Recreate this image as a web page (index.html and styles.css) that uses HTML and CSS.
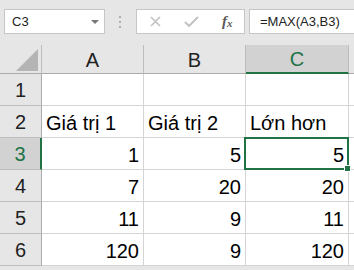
FILE: index.html
```html
<!DOCTYPE html>
<html lang="vi">
<head>
  <meta charset="UTF-8">
  <title>MAX</title>
  <link rel="stylesheet" href="styles.css">
</head>
<body>

  <div class="formula-bar">
    <div class="name-box">
      <span>C3</span>
      <svg class="caret" width="8" height="4" viewBox="0 0 8 4"><path d="M0 0h8L4 4z" fill="#777"/></svg>
    </div>
    <div class="grip">
      <svg width="3" height="12" viewBox="0 0 3 12">
        <rect x="0" y="0" width="2" height="2" fill="#b0b0b0"/>
        <rect x="0" y="5" width="2" height="2" fill="#b0b0b0"/>
        <rect x="0" y="10" width="2" height="2" fill="#b0b0b0"/>
      </svg>
    </div>
    <div class="fx-buttons">
      <svg class="btn-x" width="11" height="11" viewBox="0 0 11 11"><path d="M1 1l9 9M10 1l-9 9" stroke="#c2c2c2" stroke-width="1.6"/></svg>
      <svg class="btn-ok" width="15" height="11" viewBox="0 0 15 11"><path d="M1 6l4 4 9-9" stroke="#c2c2c2" stroke-width="2" fill="none"/></svg>
      <span class="fx">f<sub>x</sub></span>
    </div>
    <div class="formula">=MAX(A3,B3)</div>
  </div>

  <div class="sheet">
    <div class="hd corner">
      <svg width="41" height="28" viewBox="0 0 41 28"><path d="M38 4V26H16z" fill="#b4b4b4"/></svg>
    </div>
    <div class="hd col">A</div>
    <div class="hd col">B</div>
    <div class="hd col active-col">C</div>
    <div class="hd col rest"></div>

    <div class="hd row">1</div>
    <div class="cell"></div><div class="cell"></div><div class="cell"></div><div class="cell rest"></div>

    <div class="hd row">2</div>
    <div class="cell">Giá trị 1</div><div class="cell">Giá trị 2</div><div class="cell">Lớn hơn</div><div class="cell rest"></div>

    <div class="hd row active-row">3</div>
    <div class="cell num">1</div><div class="cell num">5</div><div class="cell num selected">5</div><div class="cell rest"></div>

    <div class="hd row">4</div>
    <div class="cell num">7</div><div class="cell num">20</div><div class="cell num">20</div><div class="cell rest"></div>

    <div class="hd row">5</div>
    <div class="cell num">11</div><div class="cell num">9</div><div class="cell num">11</div><div class="cell rest"></div>

    <div class="hd row">6</div>
    <div class="cell num">120</div><div class="cell num">9</div><div class="cell num">120</div><div class="cell rest"></div>
  </div>

</body>
</html>
```

FILE: styles.css
```css
* {
  box-sizing: border-box;
}

body {
  margin: 0;
  background: #e6e6e6;
  font-family: 'Liberation Sans', Arial, sans-serif;
  color: #000;
  overflow: hidden;
}

.formula-bar {
  display: flex;
  align-items: flex-start;
  height: 45px;
  padding-top: 9px;
  padding-left: 4px;
}

.name-box {
  display: flex;
  align-items: center;
  justify-content: space-between;
  width: 101px;
  height: 25px;
  background: #fff;
  border: 1px solid #c6c6c6;
  padding: 0 5px 0 7px;
  font-size: 13px;
  color: #222;
}

.grip {
  width: 31px;
  height: 25px;
  display: flex;
  align-items: center;
  justify-content: center;
}

.fx-buttons {
  display: flex;
  align-items: center;
  width: 109px;
  height: 25px;
  background: #fff;
  border: 1px solid #c6c6c6;
  padding-left: 13px;
}

.btn-x {
  margin-right: 23px;
}

.btn-ok {
  margin-right: 23px;
}

.fx {
  font-family: 'Liberation Serif', serif;
  font-style: italic;
  font-weight: bold;
  font-size: 15px;
  color: #5a5a5a;
}

.fx sub {
  font-size: 11px;
  vertical-align: -1px;
}

.formula {
  flex: 1;
  height: 25px;
  margin-left: 4px;
  background: #fff;
  border: 1px solid #c6c6c6;
  border-right: none;
  padding-left: 10px;
  font-size: 13px;
  line-height: 23px;
  color: #222;
}

.sheet {
  display: grid;
  grid-template-columns: 42px 102px 102px 103px 1fr;
  grid-template-rows: 29px repeat(6, 32px);
  background: #fff;
}

.hd {
  background: #e6e6e6;
  border-right: 1px solid #bdbdbd;
  border-bottom: 1px solid #ababab;
  display: flex;
  align-items: center;
  justify-content: center;
  font-size: 20px;
  color: #222;
}

.corner svg {
  display: block;
}

.hd.col {
  padding-top: 2px;
}

.hd.row {
  border-bottom-color: #bdbdbd;
  border-right-color: #ababab;
  padding-top: 2px;
}

.hd.rest {
  border-right: none;
}

.active-col {
  background: #d2d2d2;
  color: #217346;
  border-bottom: 2px solid #217346;
}

.active-row {
  background: #d2d2d2;
  color: #217346;
  border-right: 2px solid #217346 !important;
}

.cell {
  border-right: 1px solid #d4d4d4;
  border-bottom: 1px solid #d4d4d4;
  display: flex;
  align-items: flex-end;
  padding: 0 4px 2px 4px;
  font-size: 20px;
  line-height: 24px;
  white-space: nowrap;
}

.cell.num {
  justify-content: flex-end;
}

.cell.rest {
  border-right: none;
}

.selected {
  position: relative;
}

.selected::after {
  content: '';
  position: absolute;
  left: -2px;
  top: -1px;
  right: -1px;
  bottom: -1px;
  border: 2px solid #217346;
}

.selected::before {
  content: '';
  position: absolute;
  right: -3px;
  bottom: -3px;
  width: 5px;
  height: 5px;
  background: #217346;
  border: 1px solid #fff;
  z-index: 1;
}
```
